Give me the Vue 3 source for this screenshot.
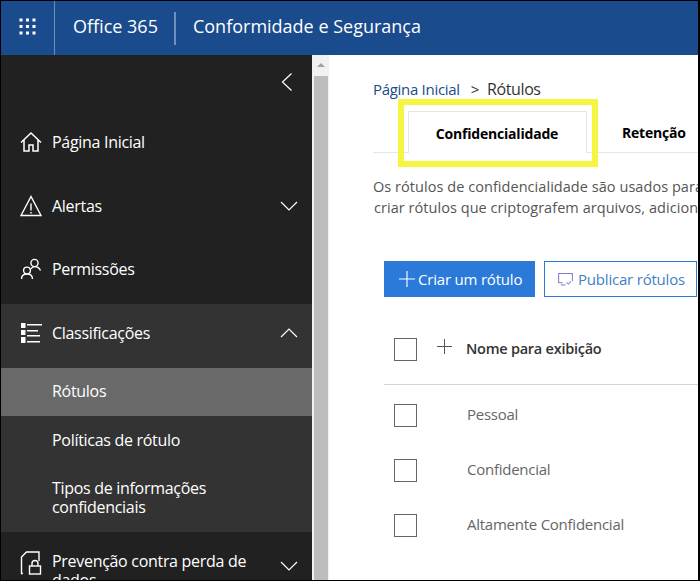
<template>
  <div class="frame">
    <header class="topbar">
      <div class="waffle">
        <svg width="18" height="18" viewBox="0 0 18 18" fill="#fff">
          <rect v-for="d in dots" :key="d.k" :x="d.x" :y="d.y" width="3" height="3" />
        </svg>
      </div>
      <span class="brand">Office 365</span>
      <span class="sep"></span>
      <span class="title">Conformidade e Segurança</span>
    </header>

    <div class="body">
      <nav class="sidebar">
        <div class="collapse">
          <svg width="12" height="20" viewBox="0 0 12 20" fill="none" stroke="#fff" stroke-width="1.2">
            <path d="M10.5 1.5 1.5 10l9 8.5" />
          </svg>
        </div>

        <a class="item first">
          <svg class="ico" width="22" height="22" viewBox="0 0 22 22" fill="none" stroke="#fff" stroke-width="1.5">
            <path d="M1 11.5 11 2l10 9.5M4 9v11h5v-6h4v6h5V9" />
          </svg>
          <span>Página Inicial</span>
        </a>
        <a class="item">
          <svg class="ico" width="22" height="22" viewBox="0 0 22 22" fill="none" stroke="#fff" stroke-width="1.4">
            <path d="M11 1.5 1 20.5h20zM11 8.5v7M11 17v1.5" />
          </svg>
          <span>Alertas</span>
          <svg class="chev" width="18" height="10" viewBox="0 0 18 10" fill="none" stroke="#fff" stroke-width="1.2">
            <path d="m1 1 8 8 8-8" />
          </svg>
        </a>
        <a class="item">
          <svg class="ico" width="22" height="22" viewBox="0 0 22 22" fill="none" stroke="#fff" stroke-width="1.4">
            <circle cx="14.5" cy="5" r="3.6" />
            <path d="M11 11c.8-1.500 2-2.400 3.500-2.400 2.600 0 5 1.400 6 4" />
            <circle cx="7" cy="12.500" r="3.400" />
            <path d="M1.500 21c0-3.200 2.400-5 5.500-5s5.500 1.800 5.500 5" />
          </svg>
          <span>Permissões</span>
        </a>

        <div class="group">
          <a class="item">
            <svg class="ico" width="22" height="22" viewBox="0 0 22 22" fill="#fff">
              <rect x="1" y="1" width="4.500" height="5" />
              <rect x="1" y="8" width="4.500" height="5" />
              <rect x="1" y="15" width="4.500" height="6" />
              <rect x="7" y="2" width="15" height="1.500" />
              <rect x="7" y="8" width="11" height="1.500" />
              <rect x="7" y="13" width="13" height="1.500" />
              <rect x="7" y="19" width="13" height="1.500" />
            </svg>
            <span>Classificações</span>
            <svg class="chev" width="18" height="10" viewBox="0 0 18 10" fill="none" stroke="#fff" stroke-width="1.2">
              <path d="m1 9 8-8 8 8" />
            </svg>
          </a>
          <a class="sub active">Rótulos</a>
          <a class="sub">Políticas de rótulo</a>
          <a class="sub two">Tipos de informações<br />confidenciais</a>
        </div>

        <a class="item last">
          <svg class="ico" width="22" height="24" viewBox="0 0 22 24" fill="none" stroke="#fff" stroke-width="1.4">
            <path d="M3 22.500H1.500V6L6.500 1H19v9" />
            <rect x="9.500" y="15" width="11" height="8" />
            <path d="M12 15v-2.500a3 3 0 0 1 6 0V15" />
          </svg>
          <span class="wrap">Prevenção contra perda de dados</span>
          <svg class="chev" width="18" height="10" viewBox="0 0 18 10" fill="none" stroke="#fff" stroke-width="1.2">
            <path d="m1 1 8 8 8-8" />
          </svg>
        </a>
      </nav>

      <div class="scrollbar">
        <div class="arrow"></div>
        <div class="thumb"></div>
      </div>

      <main class="content">
        <div class="crumbs"><span class="link">Página Inicial</span><span class="gt">&gt;</span><span class="here">Rótulos</span></div>

        <div class="tabs">
          <div class="tab selected">Confidencialidade</div>
          <div class="tab">Retenção</div>
        </div>
        <div class="highlight"></div>

        <p class="desc">Os rótulos de confidencialidade são usados para<br /><span class="ind">criar rótulos que criptografem arquivos, adicione</span></p>

        <div class="actions">
          <button class="btn primary">
            <svg width="16" height="16" viewBox="0 0 16 16" stroke="#fff" stroke-width="1.1"><path d="M8 0v16M0 8h16" /></svg>
            Criar um rótulo
          </button>
          <button class="btn outline">
            <svg width="15" height="13" viewBox="0 0 16 14" fill="none" stroke="#7a7ad0" stroke-width="1.1">
              <path d="M5 10.500H.6V.6h14.800v8M3 13h5" />
              <path d="m9 10 2 2 3-3" stroke="#5a9bd8" />
            </svg>
            Publicar rótulos
          </button>
        </div>

        <div class="row head">
          <span class="check"></span>
          <svg class="add" width="15" height="15" viewBox="0 0 15 15" stroke="#555" stroke-width="1"><path d="M7.500 0v15M0 7.500h15" /></svg>
          <span class="colname">Nome para exibição</span>
        </div>

        <div v-for="r in rows" :key="r" class="row">
          <span class="check"></span>
          <span class="cell">{{ r }}</span>
        </div>
      </main>
    </div>
  </div>
</template>

<script setup>
const rows = ["Pessoal", "Confidencial", "Altamente Confidencial"];

const dots = [];
for (let y = 0; y < 3; y++) {
  for (let x = 0; x < 3; x++) {
    dots.push({ k: x + "-" + y, x: 0.5 + x * 6.5, y: 0.5 + y * 6.5 });
  }
}
</script>

<style>
html,
body {
  margin: 0;
  background: #fff;
}
</style>

<style scoped>
.frame {
  width: 700px;
  height: 581px;
  box-sizing: border-box;
  border: 1px solid #000;
  border-right-width: 2px;
  overflow: hidden;
  display: flex;
  flex-direction: column;
  font-family: "Open Sans", "Noto Sans", sans-serif;
}

.topbar {
  height: 54px;
  flex: none;
  background: #1a4b8c;
  color: #fff;
  display: flex;
  align-items: center;
}

.waffle {
  width: 54px;
  height: 54px;
  box-sizing: border-box;
  padding-bottom: 3px;
  border-right: 1px solid #6f8fbc;
  display: flex;
  align-items: center;
  justify-content: center;
}

.brand {
  margin: 0 0 4px 18px;
  font-size: 18px;
  white-space: nowrap;
}

.sep {
  width: 2px;
  height: 33px;
  margin: 0 17px 0 16px;
  background: #6f8fbc;
}

.title {
  margin-bottom: 4px;
  font-size: 18px;
  white-space: nowrap;
}

.body {
  flex: 1;
  display: flex;
  min-height: 0;
}

.sidebar {
  width: 311px;
  flex: none;
  background: #212121;
  color: #fff;
  font-size: 16px;
  letter-spacing: -0.3px;
}

.collapse {
  height: 55px;
  box-sizing: border-box;
  padding: 17px 19px 0 0;
  display: flex;
  justify-content: flex-end;
  align-items: flex-start;
}

.item {
  height: 63px;
  display: flex;
  align-items: center;
  padding-left: 19px;
  position: relative;
}

.item.first {
  height: 64px;
}

.ico {
  flex: none;
  margin-right: 10px;
}

.chev {
  position: absolute;
  right: 14px;
  top: 50%;
  margin-top: -5px;
}

.group {
  margin-top: 4px;
  background: #333;
}

.group .item {
  height: 64px;
  box-sizing: border-box;
  padding-bottom: 6px;
}

.group .chev {
  margin-top: -8px;
}

.sub {
  display: block;
  padding-left: 51px;
  height: 48px;
  line-height: 46px;
}

.sub.active {
  background: #696969;
}

.sub + .sub {
  line-height: 48px;
}

.sub.two {
  height: 68px;
  line-height: 19px;
  padding-top: 15px;
  box-sizing: border-box;
}

.item.last {
  align-items: flex-start;
  padding-top: 20px;
  height: 48px;
  box-sizing: border-box;
}

.item.last .ico {
  margin-top: -1px;
}

.item.last .chev {
  top: 29px;
  margin-top: 0;
}

.wrap {
  width: 205px;
  line-height: 19px;
}

.scrollbar {
  width: 17px;
  flex: none;
  background: #f1f1f1;
  padding: 0 1px 0 2px;
  box-sizing: border-box;
}

.arrow {
  width: 0;
  height: 0;
  margin: 8px auto 9px;
  border: 4px solid transparent;
  border-top: 0;
  border-bottom: 4px solid #a3a3a3;
}

.thumb {
  height: 510px;
  background: #bdbdbd;
}

.content {
  flex: 1;
  min-width: 0;
  position: relative;
  overflow: hidden;
  padding-left: 44px;
  white-space: nowrap;
}

.crumbs {
  padding-top: 23px;
  font-size: 15px;
  line-height: 22px;
  letter-spacing: -0.3px;
  color: #333;
}

.link {
  color: #1a4b8c;
}

.gt {
  margin: 0 8px 0 11px;
}

.here {
  font-size: 16px;
  letter-spacing: -0.4px;
}

.tabs {
  display: flex;
  height: 41px;
  margin-top: 11px;
  border-bottom: 1px solid #e6e6e6;
  padding-left: 35px;
  font-size: 14px;
  font-weight: 700;
  color: #000;
}

.tab {
  line-height: 43px;
  letter-spacing: -0.2px;
  box-sizing: border-box;
  height: 42px;
}

.tab.selected {
  width: 179px;
  margin-right: 35px;
  padding-right: 1px;
  text-align: center;
  background: #fff;
  border: 1px solid #e6e6e6;
  border-bottom: 0;
}

.highlight {
  position: absolute;
  left: 69px;
  top: 44px;
  width: 200px;
  height: 68px;
  box-sizing: border-box;
  border: 6px solid #f5f542;
  pointer-events: none;
}

.desc {
  margin: 23px 0 0;
  font-size: 14.5px;
  line-height: 21px;
  letter-spacing: 0.05px;
  color: #555;
}

.ind {
  margin-left: 1px;
}

.actions {
  display: flex;
  gap: 9px;
  margin: 43px 0 0 11px;
}

.btn {
  height: 36px;
  box-sizing: border-box;
  display: flex;
  align-items: center;
  font-family: inherit;
  font-size: 15px;
  letter-spacing: -0.2px;
  padding: 0;
  white-space: nowrap;
}

.btn.primary {
  width: 151px;
  background: #2b79d9;
  border: 0;
  color: #fff;
  padding-left: 15px;
  gap: 3px;
}

.btn.outline {
  width: 153px;
  background: #fff;
  border: 1px solid #2b79d9;
  color: #3f7fc8;
  padding-left: 13px;
  gap: 5px;
}

.row {
  display: flex;
  align-items: center;
  height: 55px;
  padding-left: 21px;
  font-size: 15px;
  letter-spacing: -0.25px;
  color: #666;
}

.row.head {
  margin: 19px 0 3px 11px;
  padding-left: 10px;
  height: 69px;
  border-bottom: 1px solid #d4d4d4;
  color: #333;
  font-weight: 600;
  box-sizing: border-box;
  font-size: 14.5px;
}

.row.head .check {
  margin-top: -1px;
}

.check {
  width: 23px;
  height: 23px;
  box-sizing: border-box;
  border: 1px solid #666;
  flex: none;
}

.add {
  margin: -8px 0 0 20px;
}

.colname {
  margin-left: 14px;
  margin-top: -3px;
}

.cell {
  margin-left: 50px;
  margin-top: -4px;
}
</style>
